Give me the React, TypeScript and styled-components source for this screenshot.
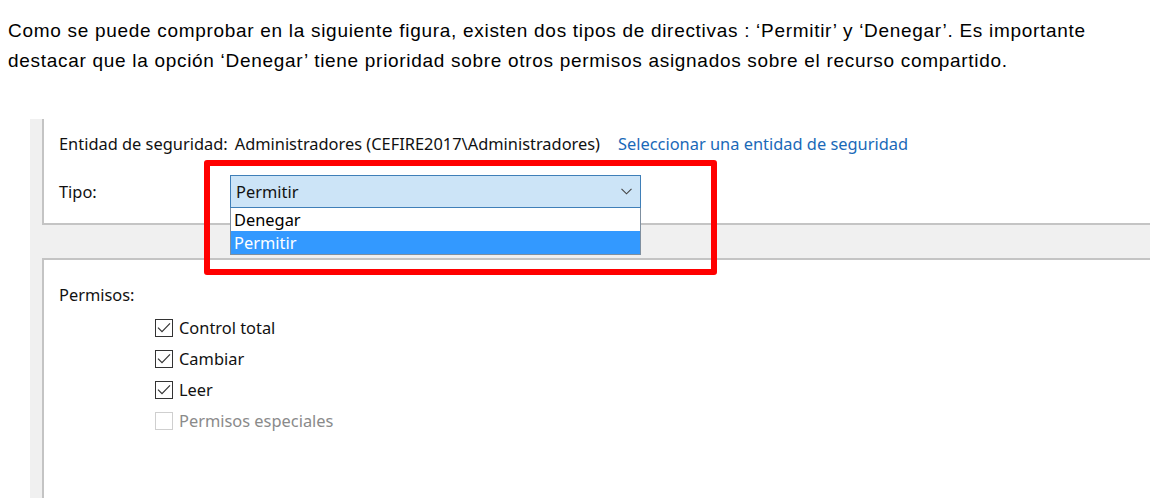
import React from "react";
import styled, { createGlobalStyle } from "styled-components";

const GlobalStyle = createGlobalStyle`
  html, body {
    margin: 0;
    padding: 0;
    background: #ffffff;
    overflow: hidden;
  }
  body {
    width: 1172px;
    height: 498px;
  }
`;

const Page = styled.div`
  width: 1172px;
  height: 498px;
  display: flex;
  flex-direction: column;
  overflow: hidden;
`;

const Intro = styled.p`
  margin: 16px 0 0 8px;
  font-family: "Liberation Sans", Arial, sans-serif;
  font-size: 19px;
  letter-spacing: 0.7px;
  line-height: 30px;
  color: #000;
  white-space: nowrap;
`;

const Shot = styled.div`
  position: relative;
  margin: 43px 0 0 30px;
  width: 1120px;
  flex: 1;
  background: #f0f0f0;
  padding-left: 12px;
  box-sizing: border-box;
  display: flex;
  flex-direction: column;
  font-family: "Noto Sans", "Segoe UI", sans-serif;
  font-size: 16.4px;
  color: #111;
`;

const TopPanel = styled.div`
  background: #fff;
  border-left: 2px solid #c4c4c4;
  border-bottom: 2px solid #c4c4c4;
  height: 106px;
  flex: none;
  box-sizing: border-box;
  padding-left: 15px;
  display: flex;
  flex-direction: column;
`;

const Row = styled.div`
  height: 48px;
  display: flex;
  align-items: center;
`;

const Label = styled.span<{ $width?: number }>`
  white-space: nowrap;
  ${(p) => (p.$width ? `width: ${p.$width}px; flex: none;` : "margin-right: 7px;")}
`;

const Value = styled.span`
  white-space: nowrap;
  margin-right: 18px;
`;

const Link = styled.span`
  white-space: nowrap;
  color: #1a69b8;
`;

const Combo = styled.div`
  position: relative;
  width: 411px;
  height: 33px;
  box-sizing: border-box;
  background: #cce4f7;
  border: 1px solid #3f7fb8;
  display: flex;
  align-items: center;
  justify-content: space-between;
  padding: 0 8px 0 5px;
`;

const DropList = styled.div`
  position: absolute;
  top: 32px;
  left: -1px;
  width: 411px;
  height: 47px;
  box-sizing: border-box;
  background: #fff;
  border: 1px solid #7f8f9f;
  border-top: none;
  display: flex;
  flex-direction: column;
  z-index: 2;
`;

const Option = styled.div<{ $selected?: boolean }>`
  flex: 1;
  display: flex;
  align-items: center;
  padding-left: 3px;
  background: ${(p) => (p.$selected ? "#3399ff" : "#fff")};
  color: ${(p) => (p.$selected ? "#fff" : "#000")};
`;

const Band = styled.div`
  height: 33px;
  flex: none;
`;

const BottomPanel = styled.div`
  flex: 1;
  background: #fff;
  border-left: 2px solid #c4c4c4;
  border-top: 2px solid #c4c4c4;
  padding: 24px 0 0 15px;
  display: flex;
  flex-direction: column;
`;

const SectionTitle = styled.div`
  line-height: 22px;
  margin-bottom: 6px;
`;

const CheckList = styled.div`
  display: flex;
  flex-direction: column;
  padding-left: 96px;
`;

const CheckRow = styled.div<{ $disabled?: boolean }>`
  height: 31px;
  display: flex;
  align-items: center;
  gap: 6px;
  color: ${(p) => (p.$disabled ? "#8a8a8a" : "#111")};
`;

const Box = styled.span<{ $disabled?: boolean }>`
  width: 18px;
  height: 18px;
  box-sizing: border-box;
  border: 1px solid ${(p) => (p.$disabled ? "#cfcfcf" : "#333")};
  background: #fff;
  display: flex;
  align-items: center;
  justify-content: center;
`;

const Highlight = styled.div`
  position: absolute;
  left: 174px;
  top: 41px;
  width: 513px;
  height: 115px;
  box-sizing: border-box;
  border: 6px solid #ff0000;
  border-radius: 3px;
  pointer-events: none;
  z-index: 3;
`;

const Chevron = () => (
  <svg width="11" height="7" viewBox="0 0 11 7">
    <path d="M0.5 0.8 L5.5 5.8 L10.5 0.8" fill="none" stroke="#444" strokeWidth="1.1" />
  </svg>
);

const Check = () => (
  <svg width="14" height="12" viewBox="0 0 14 12">
    <path d="M1 5.6 L5 9.6 L13 1.4" fill="none" stroke="#333" strokeWidth="1.2" />
  </svg>
);

const perms = [
  { label: "Control total", checked: true },
  { label: "Cambiar", checked: true },
  { label: "Leer", checked: true },
  { label: "Permisos especiales", checked: false, disabled: true },
];

export default function App() {
  return (
    <>
      <GlobalStyle />
      <Page>
        <Intro>
          Como se puede comprobar en la siguiente figura, existen dos tipos de directivas : ‘Permitir’ y ‘Denegar’. Es importante
          <br />
          destacar que la opción ‘Denegar’ tiene prioridad sobre otros permisos asignados sobre el recurso compartido.
        </Intro>
        <Shot>
          <TopPanel>
            <Row>
              <Label>Entidad de seguridad:</Label>
              <Value>Administradores (CEFIRE2017\Administradores)</Value>
              <Link>Seleccionar una entidad de seguridad</Link>
            </Row>
            <Row>
              <Label $width={171}>Tipo:</Label>
              <Combo>
                <span>Permitir</span>
                <Chevron />
                <DropList>
                  <Option>Denegar</Option>
                  <Option $selected>Permitir</Option>
                </DropList>
              </Combo>
            </Row>
          </TopPanel>
          <Band />
          <BottomPanel>
            <SectionTitle>Permisos:</SectionTitle>
            <CheckList>
              {perms.map((p) => (
                <CheckRow key={p.label} $disabled={p.disabled}>
                  <Box $disabled={p.disabled}>{p.checked && <Check />}</Box>
                  <span>{p.label}</span>
                </CheckRow>
              ))}
            </CheckList>
          </BottomPanel>
          <Highlight />
        </Shot>
      </Page>
    </>
  );
}
